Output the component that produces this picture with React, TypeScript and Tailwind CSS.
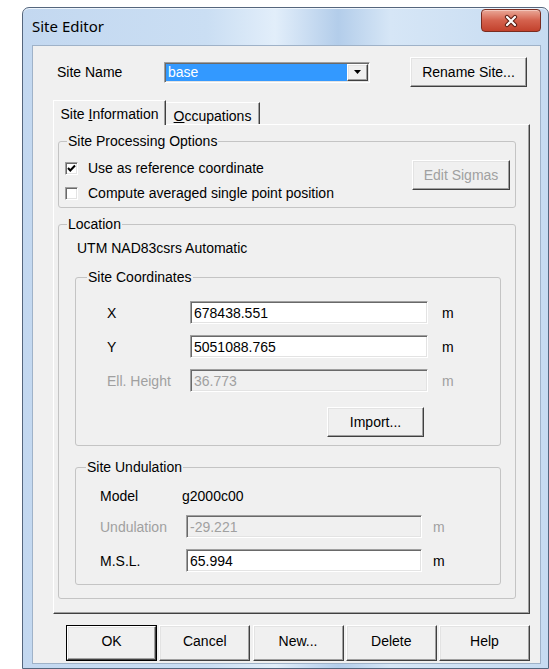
import type { ReactNode } from 'react';

// ── Classic 3D edges ──────────────────────────────────────────────────────────

const RAISED =
  'border border-t-white border-l-white border-r-[#404040] border-b-[#404040] shadow-[inset_-1px_-1px_0_#a0a0a0,inset_1px_1px_0_#e3e3e3] bg-[#f0f0f0]';
const SUNKEN =
  'border border-t-[#a0a0a0] border-l-[#a0a0a0] border-r-white border-b-white shadow-[inset_1px_1px_0_#696969,inset_-1px_-1px_0_#e3e3e3]';

// ── Controls ──────────────────────────────────────────────────────────────────

function PushButton({
  label,
  size,
  align = 'items-center',
  disabled = false,
  isDefault = false,
}: {
  label: ReactNode;
  size: string;
  align?: string;
  disabled?: boolean;
  isDefault?: boolean;
}) {
  const face = (
    <div
      className={`${RAISED} w-full h-full flex justify-center ${align} ${disabled ? 'text-[#a0a0a0]' : 'text-black'}`}
    >
      {label}
    </div>
  );
  if (isDefault) {
    return <div className={`${size} border border-black shrink-0`}>{face}</div>;
  }
  return <div className={`${size} shrink-0`}>{face}</div>;
}

function Field({ value, width, disabled = false }: { value: string; width: string; disabled?: boolean }) {
  return (
    <div
      className={`${SUNKEN} ${width} h-[23px] flex items-center pl-[3px] shrink-0 ${
        disabled ? 'bg-[#f0f0f0] text-[#a0a0a0]' : 'bg-white text-black'
      }`}
    >
      {value}
    </div>
  );
}

function CheckBox({ checked, label }: { checked: boolean; label: string }) {
  return (
    <div className="flex items-center h-[20px]">
      <div className={`${SUNKEN} bg-white w-[13px] h-[13px] shrink-0 flex items-center justify-center`}>
        {checked && (
          <svg width="9" height="9" viewBox="0 0 9 9">
            <polyline points="1,4 3.3,6.5 8,1.5" fill="none" stroke="#000" strokeWidth="2" />
          </svg>
        )}
      </div>
      <span className="ml-[10px]">{label}</span>
    </div>
  );
}

function GroupBox({ title, className, children }: { title: string; className: string; children: ReactNode }) {
  return (
    <fieldset className={`border border-[#c4c4c4] rounded-[3px] ${className}`}>
      <legend className="px-[1px] leading-[16px]">{title}</legend>
      {children}
    </fieldset>
  );
}

function CloseButton() {
  return (
    <div className="mt-[1px] w-[60px] h-[23px] rounded-[4px] border border-[#7a2c20] bg-gradient-to-b from-[#e9a898] via-[#d4614d] to-[#c2412c] shadow-[inset_0_1px_0_#f3c6bb] flex items-center justify-center">
      <svg width="16" height="14" viewBox="0 0 16 14">
        <path d="M4 3 L12 11 M12 3 L4 11" stroke="#5a1e14" strokeWidth="4.2" strokeLinecap="round" />
        <path d="M4 3 L12 11 M12 3 L4 11" stroke="#ffffff" strokeWidth="2.2" strokeLinecap="round" />
      </svg>
    </div>
  );
}

// ── Dialog ────────────────────────────────────────────────────────────────────

export default function App() {
  return (
    <div className="w-[549px] h-[669px] overflow-hidden bg-white pl-[22px] pt-[7px] font-['Liberation_Sans',Arial,sans-serif] text-[14px] leading-[16px] text-black">
      <div className="w-[527px] h-[662px] rounded-t-[7px] border border-[#55667d] pl-[9px] pr-[7px] bg-[linear-gradient(90deg,#c3d8f0_0%,#cadef3_35%,#e2eefa_48%,#b3cdea_60%,#d6e6f6_70%,#c6dbf1_100%)] shadow-[inset_0_1px_0_#eef5fc]">
        {/* title bar */}
        <div className="h-[37px] flex items-start justify-between">
          <span className="mt-[8px] font-['Noto_Sans',sans-serif] text-[15px] leading-[20px] text-black">
            Site Editor
          </span>
          <CloseButton />
        </div>

        {/* client area */}
        <div className="w-[509px] h-[619px] bg-[#f0f0f0] border border-[#9fb2c8] flex flex-col">
          {/* site name row */}
          <div className="mt-[11px] h-[30px] flex items-center pl-[24px]">
            <span className="w-[107px] shrink-0">Site Name</span>
            <div className={`${SUNKEN} w-[206px] h-[21px] bg-white flex items-stretch p-[1px]`}>
              <div className="flex-1 bg-[#3399ff] text-white pl-[2px] flex items-center">base</div>
              <div className={`${RAISED} w-[21px] flex items-center justify-center`}>
                <svg width="7" height="4" viewBox="0 0 7 4">
                  <polygon points="0,0 7,0 3.5,4" fill="#000" />
                </svg>
              </div>
            </div>
            <div className="ml-[40px]">
              <PushButton label="Rename Site..." size="w-[117px] h-[30px]" />
            </div>
          </div>

          {/* tabs */}
          <div className="mt-[13px] ml-[20px] h-[24px] flex items-end relative z-10">
            <div className="h-[25px] -mb-px w-[113px] bg-[#f0f0f0] border-t border-l border-t-white border-l-white border-r border-r-[#404040] shadow-[inset_-1px_0_0_#a0a0a0] flex items-start justify-center pt-[5px]">
              <span>
                Site <u>I</u>nformation
              </span>
            </div>
            <div className="h-[22px] w-[94px] border-t border-t-white border-r border-r-[#404040] shadow-[inset_-1px_0_0_#a0a0a0] flex items-start justify-center pt-[5px]">
              <span>
                <u>O</u>ccupations
              </span>
            </div>
          </div>

          {/* tab page */}
          <div className="ml-[20px] w-[477px] h-[490px] border border-t-white border-l-white border-r-[#404040] border-b-[#404040] shadow-[inset_-1px_-1px_0_#a0a0a0] flex flex-col">
            <GroupBox title="Site Processing Options" className="mt-[8px] ml-[4px] w-[458px] pb-[4px] [&>legend]:ml-[8px]">
              <div className="flex justify-between pl-[6px] pr-[5px]">
                <div className="mt-[9px] flex flex-col gap-[5px]">
                  <CheckBox checked label="Use as reference coordinate" />
                  <CheckBox checked={false} label="Compute averaged single point position" />
                </div>
                <div className="mt-[11px]">
                  <PushButton label="Edit Sigmas" size="w-[98px] h-[30px]" disabled />
                </div>
              </div>
            </GroupBox>

            <GroupBox title="Location" className="mt-[8px] ml-[4px] w-[458px] pb-[13px] [&>legend]:ml-[8px]">
              <div className="mt-[8px] pl-[18px]">UTM NAD83csrs Automatic</div>

              <GroupBox title="Site Coordinates" className="mt-[13px] ml-[16px] w-[426px] pb-[8px] [&>legend]:ml-[11px]">
                <div className="mt-[16px] flex flex-col gap-[11px] pl-[31px]">
                  <div className="flex items-center h-[23px]">
                    <span className="w-[83px] shrink-0">X</span>
                    <Field value="678438.551" width="w-[238px]" />
                    <span className="ml-[14px]">m</span>
                  </div>
                  <div className="flex items-center h-[23px]">
                    <span className="w-[83px] shrink-0">Y</span>
                    <Field value="5051088.765" width="w-[238px]" />
                    <span className="ml-[14px]">m</span>
                  </div>
                  <div className="flex items-center h-[23px] text-[#a0a0a0]">
                    <span className="w-[83px] shrink-0">Ell. Height</span>
                    <Field value="36.773" width="w-[238px]" disabled />
                    <span className="ml-[14px]">m</span>
                  </div>
                </div>
                <div className="mt-[15px] ml-[251px]">
                  <PushButton label="Import..." size="w-[97px] h-[30px]" />
                </div>
              </GroupBox>

              <GroupBox title="Site Undulation" className="mt-[13px] ml-[16px] w-[426px] pb-[12px] [&>legend]:ml-[10px]">
                <div className="mt-[13px] pl-[24px] flex h-[16px]">
                  <span className="w-[82px] shrink-0">Model</span>
                  <span>g2000c00</span>
                </div>
                <div className="mt-[11px] flex flex-col gap-[11px] pl-[24px]">
                  <div className="flex items-center h-[23px] text-[#a0a0a0]">
                    <span className="w-[86px] shrink-0">Undulation</span>
                    <Field value="-29.221" width="w-[236px]" disabled />
                    <span className="ml-[11px]">m</span>
                  </div>
                  <div className="flex items-center h-[23px]">
                    <span className="w-[86px] shrink-0">M.S.L.</span>
                    <Field value="65.994" width="w-[236px]" />
                    <span className="ml-[11px]">m</span>
                  </div>
                </div>
              </GroupBox>
            </GroupBox>
          </div>

          {/* dialog buttons */}
          <div className="mt-[11px] ml-[33px] w-[464px] flex justify-between">
            <PushButton label="OK" size="w-[91px] h-[36px]" align="items-start pt-[6px]" isDefault />
            <PushButton label="Cancel" size="w-[91px] h-[36px]" align="items-start pt-[7px]" />
            <PushButton label="New..." size="w-[91px] h-[36px]" align="items-start pt-[7px]" />
            <PushButton label="Delete" size="w-[91px] h-[36px]" align="items-start pt-[7px]" />
            <PushButton label="Help" size="w-[91px] h-[36px]" align="items-start pt-[7px]" />
          </div>
        </div>
      </div>
    </div>
  );
}
